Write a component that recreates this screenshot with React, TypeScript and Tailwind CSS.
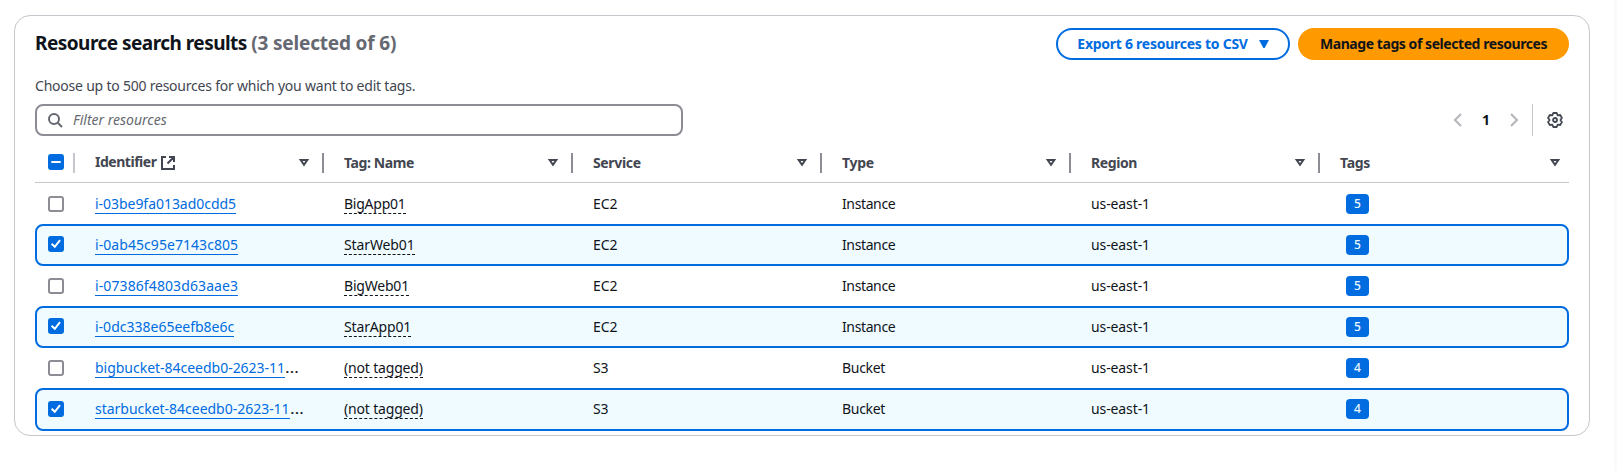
type Column = { label: string; text: string };

const columns: Column[] = [
  { label: "Identifier", text: "tracking-[-0.48px]" },
  { label: "Tag: Name", text: "tracking-[-0.4px]" },
  { label: "Service", text: "tracking-[-0.35px]" },
  { label: "Type", text: "tracking-[-0.3px]" },
  { label: "Region", text: "tracking-[-0.4px]" },
  { label: "Tags", text: "tracking-[-0.3px]" },
];

type Row = {
  id: string;
  idText: string;
  cut?: boolean;
  name: string;
  nameText: string;
  service: string;
  type: string;
  tags: number;
  selected: boolean;
};

const rows: Row[] = [
  { id: "i-03be9fa013ad0cdd5", idText: "tracking-[-0.04px]", name: "BigApp01", nameText: "tracking-[-0.25px]", service: "EC2", type: "Instance", tags: 5, selected: false },
  { id: "i-0ab45c95e7143c805", idText: "tracking-[0.06px]", name: "StarWeb01", nameText: "tracking-[-0.12px]", service: "EC2", type: "Instance", tags: 5, selected: true },
  { id: "i-07386f4803d63aae3", idText: "tracking-[0.1px]", name: "BigWeb01", nameText: "tracking-[-0.2px]", service: "EC2", type: "Instance", tags: 5, selected: false },
  { id: "i-0dc338e65eefb8e6c", idText: "tracking-[0px]", name: "StarApp01", nameText: "tracking-[-0.15px]", service: "EC2", type: "Instance", tags: 5, selected: true },
  { id: "bigbucket-84ceedb0-2623-11", idText: "tracking-[-0.02px]", cut: true, name: "(not tagged)", nameText: "tracking-[-0.17px]", service: "S3", type: "Bucket", tags: 4, selected: false },
  { id: "starbucket-84ceedb0-2623-11", idText: "tracking-[-0.02px]", cut: true, name: "(not tagged)", nameText: "tracking-[-0.17px]", service: "S3", type: "Bucket", tags: 4, selected: true },
];

const grid = "grid grid-cols-[60px_249px_249px_249px_249px_249px_229px]";

function Caret() {
  return (
    <svg className="h-4 w-4 shrink-0" viewBox="0 0 16 16" fill="none" stroke="#424650" strokeWidth="2">
      <path d="M4.7 5h6.6L8 9.8z" />
    </svg>
  );
}

function External() {
  return (
    <svg className="h-4 w-4 shrink-0" viewBox="0 0 16 16" fill="none" stroke="#424650" strokeWidth="2">
      <path d="M14 10v4H2V2h4M9 2h5v5M14 2 7.5 8.5" />
    </svg>
  );
}

function Gear() {
  return (
    <svg className="h-4 w-4" viewBox="0 0 16 16" fill="none" stroke="#424650" strokeWidth="1.8" strokeLinejoin="round">
      <path d="M6.3 1h3.4l1 2.3 2.5-.3 1.7 2.9L13.4 8l1.5 2.1-1.7 2.9-2.5-.3-1 2.3H6.3l-1-2.3-2.5.3-1.7-2.9L2.6 8 1.1 5.9 2.8 3l2.5.3z" />
      <circle cx="8" cy="8" r="2" />
    </svg>
  );
}

function Checkbox({ state }: { state: "on" | "off" | "mixed" }) {
  if (state === "off") return <span className="block h-4 w-4 rounded-[3px] border-2 border-[#8c8c94] bg-white" />;
  return (
    <span className="block h-4 w-4 rounded-[3px] bg-[#006ce0]">
      <svg className="h-4 w-4" viewBox="0 0 16 16" fill="none" stroke="#fff" strokeWidth="2">
        <path d={state === "mixed" ? "M3.3 8h9.4" : "M3.6 7.8 6.8 10.8 12 4.2"} />
      </svg>
    </span>
  );
}

export default function App() {
  return (
    <div className="flex h-[471px] w-[1617px] justify-between overflow-hidden bg-white font-['Noto_Sans',sans-serif] text-[14px] leading-5 text-[#0f141a]">
      <main className="mt-[15px] ml-[14px] h-[421px] w-[1576px] rounded-2xl border border-[#c6c6cd] px-5 pt-3">
        <header className="flex h-8 items-center justify-between">
          <h1 className="-mt-0.5 text-[19px] font-bold tracking-[-0.53px] whitespace-nowrap">
            Resource search results <span className="tracking-[-0.18px] text-[#656871]">(3 selected of 6)</span>
          </h1>
          <div className="flex gap-2 text-[14px] font-bold whitespace-nowrap">
            <button className="flex h-8 w-[234px] items-center justify-center gap-2 rounded-full border-2 border-[#006ce0] pl-[3px] tracking-[-0.26px] text-[#006ce0]">
              Export 6 resources to CSV
              <svg className="h-4 w-4" viewBox="0 0 16 16" fill="#006ce0">
                <path d="M3 4h10L8.7 12H7.3z" />
              </svg>
            </button>
            <button className="h-8 w-[271px] rounded-full bg-[#ff9900] tracking-[-0.44px]">Manage tags of selected resources</button>
          </div>
        </header>
        <p className="mt-4 tracking-[-0.22px] text-[#424650]">Choose up to 500 resources for which you want to edit tags.</p>
        <div className="mt-2 flex h-8 items-center justify-between">
          <div className="flex h-8 w-[648px] items-center gap-2 rounded-lg border-2 border-[#8c8c94] pl-[11px] text-[#656871] italic">
            <svg className="h-4 w-4" viewBox="0 0 16 16" fill="none" stroke="#656871" strokeWidth="2">
              <circle cx="6" cy="7" r="5" />
              <path d="m14 15-4.5-4.5" />
            </svg>
            <span className="pl-px">Filter resources</span>
          </div>
          <div className="flex h-8 items-center">
            <svg className="h-4 w-4" viewBox="0 0 16 16" fill="none" stroke="#b4b4bb" strokeWidth="2">
              <path d="M11 2 5 8l6 6" />
            </svg>
            <span className="w-10 text-center font-bold">1</span>
            <svg className="h-4 w-4" viewBox="0 0 16 16" fill="none" stroke="#b4b4bb" strokeWidth="2">
              <path d="m5 2 6 6-6 6" />
            </svg>
            <span className="ml-[10px] h-8 w-px bg-[#c6c6cd]" />
            <span className="mr-[6px] ml-[14px]">
              <Gear />
            </span>
          </div>
        </div>
        <div className={`${grid} h-[47px] border-b border-[#c6c6cd] font-bold text-[#424650]`}>
          <div className="flex pt-[17px] pl-[13px]">
            <div className="pt-px">
              <Checkbox state="mixed" />
            </div>
            <span className="ml-[9px] h-5 w-0.5 bg-[#c6c6cd]" />
          </div>
          {columns.map((c, i) => (
            <div key={c.label} className="flex pt-[17px]">
              <span className={`${c.text} ${i === 0 ? "-mt-px" : ""}`}>{c.label}</span>
              {i === 0 && (
                <span className="ml-1 pt-[2px]">
                  <External />
                </span>
              )}
              <span className={i === 5 ? "mr-[6px] ml-auto pt-[2px]" : "ml-auto pt-[2px]"}>
                <Caret />
              </span>
              {i < 5 && <span className="mr-5 ml-[10px] h-5 w-0.5 bg-[#8c8c94]" />}
            </div>
          ))}
        </div>
        {rows.map((r, i) => {
          const last = i === rows.length - 1;
          const frame = r.selected
            ? `${last ? "h-[43px]" : "-mb-px h-[42px]"} rounded-lg border-2 border-[#006ce0] bg-[#f0fbff]`
            : "h-[41px] border-2 border-transparent";
          return (
            <div key={r.id} className={frame}>
              <div className={`${grid} -mx-0.5 pt-[9px] whitespace-nowrap`}>
                <div className={r.selected && !last ? "pt-px pl-[13px]" : "pt-[2px] pl-[13px]"}>
                  <Checkbox state={r.selected ? "on" : "off"} />
                </div>
                <div>
                  <span className={`${r.idText} border-b border-[#006ce0] text-[#006ce0]`}>{r.id}</span>
                  {r.cut && <span className="inline-block origin-left scale-x-[1.25]">…</span>}
                </div>
                <div>
                  <span className={`${r.nameText} border-b border-dashed border-[#0f141a]`}>{r.name}</span>
                </div>
                <div className="tracking-[-0.1px]">{r.service}</div>
                <div className={r.type === "Instance" ? "tracking-[-0.38px]" : "tracking-[-0.3px]"}>{r.type}</div>
                <div className="tracking-[-0.1px]">us-east-1</div>
                <div className="pl-[6px]">
                  <span className="block h-5 w-[23px] rounded bg-[#006ce0] text-center text-[12px] font-medium text-[#ebf8ff]">{r.tags}</span>
                </div>
              </div>
            </div>
          );
        })}
      </main>
      <div className="w-[3px] bg-[#fafafa]" />
    </div>
  );
}
